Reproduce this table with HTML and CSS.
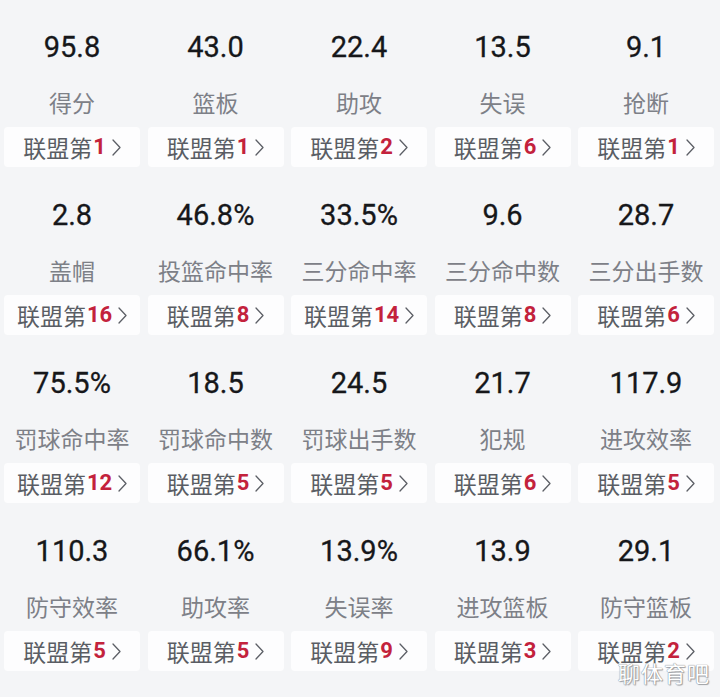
FILE: index.html
```html
<!DOCTYPE html>
<html lang="zh-CN">
<head>
<meta charset="utf-8">
<link rel="stylesheet" href="styles.css">
</head>
<body>
<div class="page">
  <div class="grid" id="grid"></div>
  <div class="watermark">聊体育吧</div>
</div>
<script>
const data = [
  ["95.8","得分",1],["43.0","篮板",1],["22.4","助攻",2],["13.5","失误",6],["9.1","抢断",1],
  ["2.8","盖帽",16],["46.8%","投篮命中率",8],["33.5%","三分命中率",14],["9.6","三分命中数",8],["28.7","三分出手数",6],
  ["75.5%","罚球命中率",12],["18.5","罚球命中数",5],["24.5","罚球出手数",5],["21.7","犯规",6],["117.9","进攻效率",5],
  ["110.3","防守效率",5],["66.1%","助攻率",5],["13.9%","失误率",9],["13.9","进攻篮板",3],["29.1","防守篮板",2]
];
const chev = '<svg class="chev" width="9" height="17" viewBox="0 0 9 17"><path d="M1 1 L8 8.5 L1 16" fill="none" stroke="#5c5f66" stroke-width="1.3" stroke-linecap="round" stroke-linejoin="round"/></svg>';
document.getElementById('grid').innerHTML = data.map(d =>
  `<div class="cell"><div class="val">${d[0]}</div><div class="lbl">${d[1]}</div><div class="rank"><span class="rk-t">联盟第</span><span class="rk-n">${d[2]}</span>${chev}</div></div>`
).join('');
</script>
</body>
</html>
```

FILE: styles.css
```css
html, body {
  margin: 0;
  padding: 0;
  background: #f4f5f7;
}
.page {
  position: relative;
  width: 720px;
  height: 697px;
  overflow: hidden;
  background: #f4f5f7;
}
.grid {
  width: 711px;
  padding: 0 5px 0 4px;
  display: grid;
  grid-template-columns: repeat(5, 136px);
  grid-auto-rows: 168px;
  align-content: start;
  column-gap: 7.5px;
  border-right: 1px solid #e9ebee;
  height: 697px;
  box-sizing: content-box;
}
.cell {
  height: 168px;
  display: flex;
  flex-direction: column;
  align-items: center;
  padding-top: 30px;
  box-sizing: border-box;
}
.val {
  font-family: Roboto, "Liberation Sans", sans-serif;
  font-weight: 400;
  font-size: 29px;
  line-height: 34px;
  color: #16171a;
  height: 34px;
  -webkit-text-stroke: 0.3px #16171a;
}
.lbl {
  margin-top: 23px;
  font-family: "Noto Sans CJK SC", sans-serif;
  font-size: 23px;
  line-height: 30px;
  height: 30px;
  color: #7d8087;
  white-space: nowrap;
}
.rank {
  margin-top: 10px;
  width: 136px;
  height: 40px;
  background: #fdfdfe;
  border-radius: 4px;
  display: flex;
  align-items: center;
  justify-content: center;
  font-family: "Noto Sans CJK SC", sans-serif;
  font-size: 23px;
  color: #5a5d64;
}
.rk-t {
  line-height: 30px;
}
.rk-n {
  font-family: Roboto, "Liberation Sans", sans-serif;
  font-weight: 700;
  font-size: 22px;
  color: #c3223c;
  line-height: 30px;
  margin-left: 1px;
}
.chev {
  margin-left: 6px;
  display: block;
}
.watermark {
  position: absolute;
  right: 10px;
  bottom: 12px;
  font-family: "Noto Sans CJK SC", sans-serif;
  font-size: 22px;
  line-height: 26px;
  color: #ffffff;
  letter-spacing: 1px;
  text-shadow: 0 0 1px #8a8d93, 0 0 1px #8a8d93, 1px 1px 1px #a0a3a8;
}
```
